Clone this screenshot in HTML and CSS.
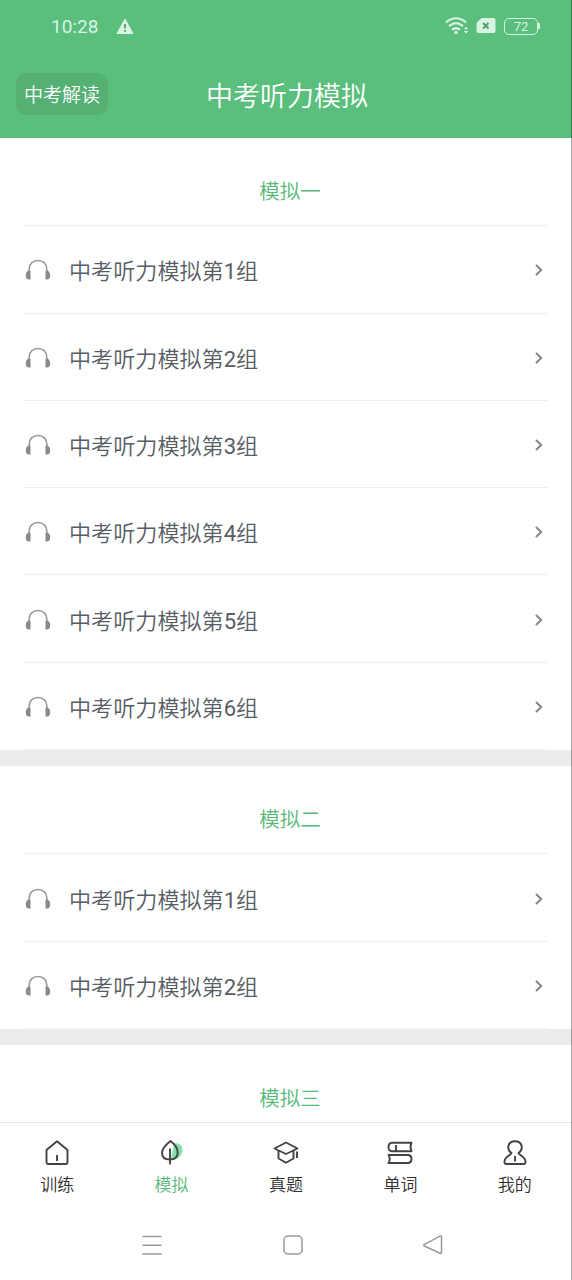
FILE: index.html
```html
<!DOCTYPE html>
<html lang="zh-CN">
<head>
<meta charset="utf-8">
<title>中考听力模拟</title>
<link rel="stylesheet" href="styles.css">
</head>
<body>
<svg class="sprite" aria-hidden="true">
  <symbol id="headphones" viewBox="0 0 26 22">
    <path d="M4.1 13V10.5C4.1 5 7.8 1.5 13 1.5S21.9 5 21.9 10.500V13" fill="none" stroke="#969799" stroke-width="1.6"/>
    <path d="M5.500 11.800V20.600H4C1.800 20.600.8 19 .8 16.200S2.200 11.800 4 11.800ZM20.500 11.800V20.600H22C24.200 20.600 25.200 19 25.200 16.200S23.800 11.800 22 11.800Z" fill="#88898b"/>
  </symbol>
  <symbol id="chevron" viewBox="0 0 10 14">
    <path d="M2 2L7.200 7L2 12" fill="none" stroke="#858585" stroke-width="2"/>
  </symbol>
</svg>
<div class="screen">
  <header class="header">
    <div class="status">
      <span class="clock">10:28</span>
      <svg class="warning" width="18" height="17" viewBox="0 0 18 17"><path d="M9 1L17 15.500H1Z" fill="#d9f4e3" stroke="#d9f4e3" stroke-linejoin="round"/><path d="M9 6V10.500M9 12V13.800" stroke="#4f9f6b" stroke-width="1.800"/></svg>
      <div class="indicators">
        <svg width="24" height="20" viewBox="0 0 24 20" fill="none" stroke="#d9f4e3" stroke-width="2.200"><path d="M1 6.500C7 .8 15 .8 21 6.500M4 10.200C8.500 6.200 13.500 6.200 18 10.200M7 13.800C9.700 11.700 12.300 11.700 15 13.800"/><circle cx="11" cy="16.500" r="1.700" fill="#d9f4e3" stroke="none"/><path d="M18.800 13.200L21 10.800L23.200 13.200ZM18.800 15L21 17.400L23.200 15Z" fill="#d9f4e3" stroke="none"/></svg>
        <svg class="sim" width="20" height="17" viewBox="0 0 20 17"><path d="M5.500 1H17.500Q19.500 1 19.500 3V14Q19.500 16 17.500 16H2.500Q.5 16 .5 14V6Z" fill="#d9f4e3"/><path d="M7 6L12.500 11.500M12.500 6L7 11.500" stroke="#4f9f6b" stroke-width="1.800"/></svg>
        <span class="battery">72</span>
      </div>
    </div>
    <div class="titlebar">
      <span class="guide">中考解读</span>
      <h1 class="title">中考听力模拟</h1>
    </div>
  </header>
  <main class="content">
    <section class="group">
      <h2 class="group-title">模拟一</h2>
      <div class="row"><svg class="headphones"><use href="#headphones"/></svg><span>中考听力模拟第<b>1</b>组</span><svg class="chevron"><use href="#chevron"/></svg></div>
      <div class="row"><svg class="headphones"><use href="#headphones"/></svg><span>中考听力模拟第<b>2</b>组</span><svg class="chevron"><use href="#chevron"/></svg></div>
      <div class="row"><svg class="headphones"><use href="#headphones"/></svg><span>中考听力模拟第<b>3</b>组</span><svg class="chevron"><use href="#chevron"/></svg></div>
      <div class="row"><svg class="headphones"><use href="#headphones"/></svg><span>中考听力模拟第<b>4</b>组</span><svg class="chevron"><use href="#chevron"/></svg></div>
      <div class="row"><svg class="headphones"><use href="#headphones"/></svg><span>中考听力模拟第<b>5</b>组</span><svg class="chevron"><use href="#chevron"/></svg></div>
      <div class="row"><svg class="headphones"><use href="#headphones"/></svg><span>中考听力模拟第<b>6</b>组</span><svg class="chevron"><use href="#chevron"/></svg></div>
    </section>
    <section class="group">
      <h2 class="group-title">模拟二</h2>
      <div class="row"><svg class="headphones"><use href="#headphones"/></svg><span>中考听力模拟第<b>1</b>组</span><svg class="chevron"><use href="#chevron"/></svg></div>
      <div class="row"><svg class="headphones"><use href="#headphones"/></svg><span>中考听力模拟第<b>2</b>组</span><svg class="chevron"><use href="#chevron"/></svg></div>
    </section>
    <section class="group">
      <h2 class="group-title">模拟三</h2>
    </section>
  </main>
  <nav class="tabs">
    <div class="tab"><svg class="tab-icon" viewBox="0 0 30 30"><path d="M4.500 12L15 3.200L25.500 12V24.500Q25.500 26 24 26H6Q4.500 26 4.500 24.500ZM15 17V23"/></svg><span>训练</span></div>
    <div class="tab active"><svg class="tab-icon" viewBox="0 0 30 30"><path class="leaf" d="M17 5.500C28.500 2.500 29 21.500 14 22Z"/><path d="M13.500 3C9 6.500 5 10.500 5 15C5 19.500 8 21.500 13 21.500C18.500 21.500 20.700 19 20.700 14.500C20.700 10 17.500 6 13.500 3ZM13 10.500V26.500"/></svg><span>模拟</span></div>
    <div class="tab"><svg class="tab-icon" viewBox="0 0 30 30"><path d="M15 4.500L26.500 10.500L15 16L3.500 10.500ZM7.500 13V20.500L15 24.800L22.500 20.500V13M26 13.500V20"/></svg><span>真题</span></div>
    <div class="tab"><svg class="tab-icon" viewBox="0 0 30 30"><path d="M26.500 4.800H7Q3.500 5 3.500 9T7 13.300H26.500Q24.500 9 26.500 4.800ZM11 7V12.500M3.500 17H23.500Q26.500 17.500 26.500 21T23.500 25H3.500Q6 21 3.500 17Z"/></svg><span>单词</span></div>
    <div class="tab"><svg class="tab-icon" viewBox="0 0 30 30"><path d="M11.500 15C6.300 11.500 7.300 3.200 15 3.200S23.700 11.500 18.500 15C18.500 17 25.500 18.500 25.500 23.500V24.500Q25.500 26 24 26H6Q4.500 26 4.500 24.500V23.500C4.500 18.500 11.500 17 11.500 15ZM15 18V23.500"/></svg><span>我的</span></div>
  </nav>
  <footer class="system">
    <svg viewBox="0 0 22 22"><path d="M1.500 2.500H20.500M1.500 11.200H20.500M1.500 20H20.500"/></svg>
    <svg viewBox="0 0 22 22"><rect x="2" y="2" width="18" height="18" rx="4"/></svg>
    <svg viewBox="0 0 22 22"><path d="M2.500 10.300L18 2.200Q19.500 1.600 19.500 3V18.500Q19.500 20 18 19.300L2.500 12Q1 11.200 2.500 10.300Z"/></svg>
  </footer>
  <div class="edge"></div>
</div>
</body>
</html>
```
FILE: styles.css
```css
* { box-sizing: border-box; }
body { margin: 0; background: #fff; font-family: Roboto, "Noto Sans CJK SC", sans-serif; font-weight: 350; }
.sprite { position: absolute; width: 0; height: 0; }
.screen { position: relative; height: 1280px; display: flex; flex-direction: column; overflow: hidden; }
.header { height: 138px; flex: none; background: #5abe7c; color: #fff; }
.status { height: 52px; padding: 0 34px 0 51px; display: flex; align-items: center; color: #d9f4e3; }
.clock { font-size: 19px; font-weight: 400; width: 65px; }
.indicators { margin-left: auto; display: flex; align-items: center; gap: 7px; }
.sim { margin: 0 1px 1px 0; }
.battery { position: relative; width: 34px; height: 17px; border: 1.500px solid #d9f4e3; border-radius: 5px; font-size: 13px; font-weight: 400; line-height: 15px; text-align: center; }
.battery::after { content: ""; position: absolute; right: -3px; top: 4px; width: 2px; height: 6px; background: #d9f4e3; }
.titlebar { height: 84px; display: grid; grid-template-columns: 206px 1fr; align-items: center; }
.guide { margin-left: 16px; width: 92px; height: 42px; border-radius: 10px; background: #54b073; font-size: 19px; line-height: 45px; text-align: center; }
.title { margin: 0; padding-top: 5px; font-size: 27px; line-height: 40px; font-weight: 350; }
.content { height: 984px; overflow: hidden; }
.group { border-bottom: 16px solid #ebecee; padding: 0 24px; }
.group-title { margin: 0; height: 88.300px; padding: 18px 0 0 8px; border-bottom: 1px solid #eee; color: #55b876; font-size: 20.500px; font-weight: 350; line-height: 72px; text-align: center; }
.row { height: 87.300px; display: flex; align-items: center; border-bottom: 1px solid #eee; color: #575d65; font-size: 22.100px; padding-top: 2px; }
.row span { margin-bottom: 2px; }
.row b { font-weight: 400; }
.row:last-child { border-bottom-color: #f2f2f3; }
.headphones { width: 26px; height: 22px; margin: 0 18px 0 1px; }
.chevron { width: 10px; height: 14px; margin: 0 4px 0 auto; }
.tabs { height: 88px; border-top: 1px solid #e5e5e5; display: grid; grid-template-columns: repeat(5, 1fr); padding-top: 15px; }
.tab { display: flex; flex-direction: column; align-items: center; color: #303030; font-size: 17px; line-height: 26px; gap: 4px; }
.tab-icon { width: 30px; height: 30px; fill: none; stroke: #434343; stroke-width: 1.900; stroke-linejoin: round; }
.active { color: #55b876; }
.leaf { fill: #86dfa9; stroke: none; }
.system { height: 70px; padding: 0 128px 0 141px; display: flex; justify-content: space-between; align-items: center; }
.system svg { width: 22px; height: 22px; fill: none; stroke: #999; stroke-width: 1.500; }
.edge { position: absolute; top: 0; right: 0; width: 1px; height: 100%; background: rgba(0, 0, 0, .32); }
```
